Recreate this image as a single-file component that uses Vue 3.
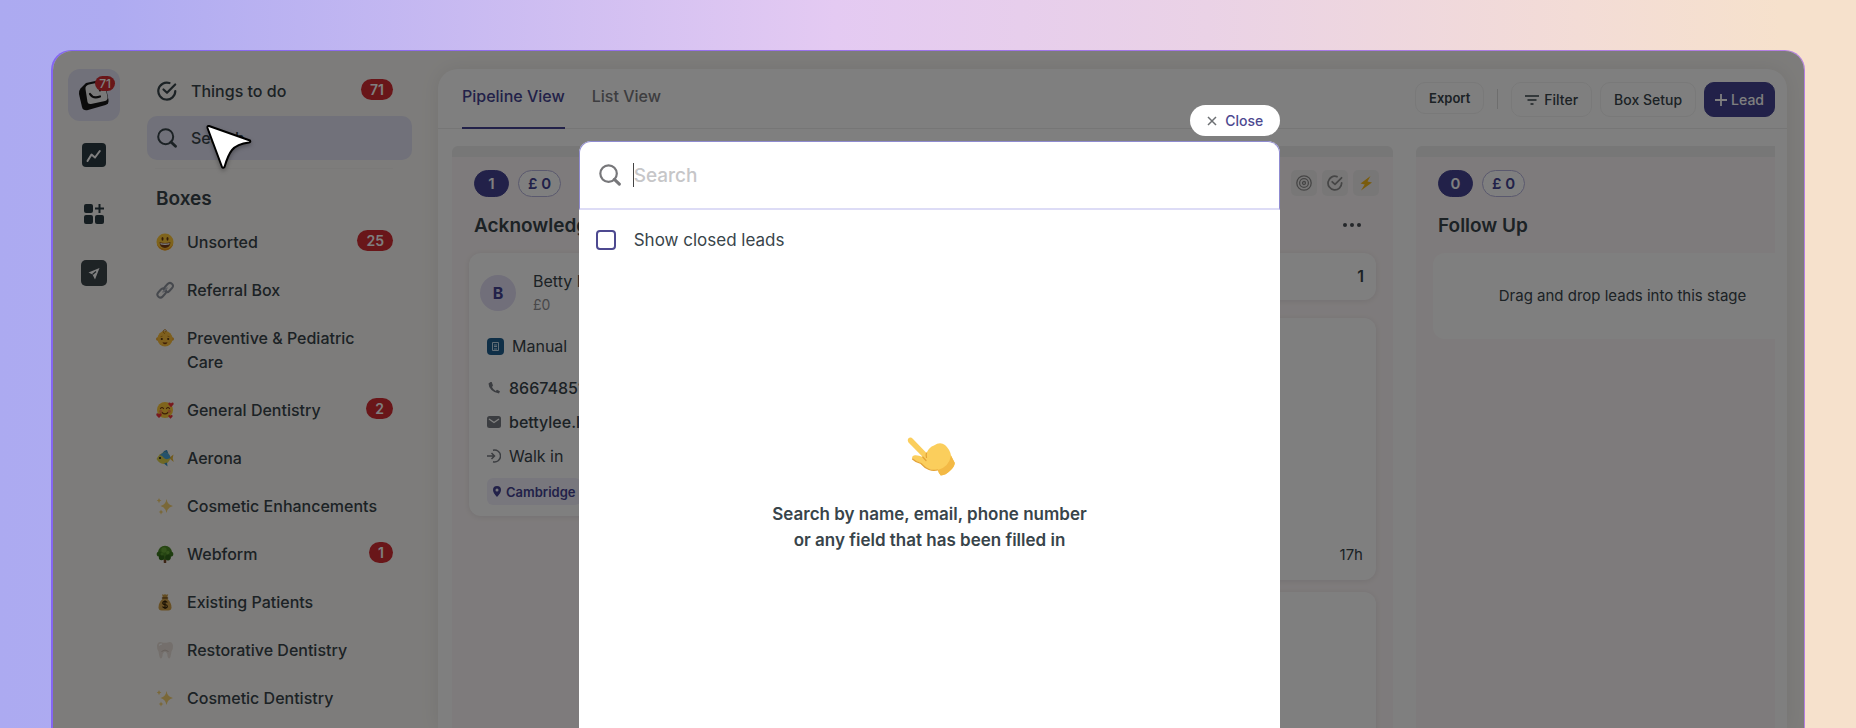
<template>
  <div class="page">
    <svg class="sprite" aria-hidden="true">
      <symbol id="smile" viewBox="0 0 18 18">
        <circle cx="9" cy="9" r="8.5" fill="#ffc838" />
        <path d="M9 17.5a8.500 8.500 0 0 0 8.300-7c-2 4-5 5-8.300 5s-6.500-1-8.300-5a8.500 8.500 0 0 0 8.300 7z" fill="#f09a20" />
        <ellipse cx="6.500" cy="5.800" rx="1" ry="1.900" fill="#6b3a10" />
        <ellipse cx="11.500" cy="5.800" rx="1" ry="1.900" fill="#6b3a10" />
        <path d="M3.500 9.300q5.500 1.400 11 0q-.5 5.700-5.500 5.700t-5.500-5.700z" fill="#7a3c12" />
        <path d="M4.300 9.900q4.700 1 9.400 0l-.4 1.700q-4.300.8-8.600 0z" fill="#fff" />
      </symbol>
      <symbol id="link" viewBox="0 0 18 18">
        <g fill="none" stroke="#8d929c" stroke-width="2">
          <rect x="7.500" y="3.500" width="10" height="6" rx="3" transform="rotate(-48 12.500 6.500)" />
          <rect x="0.800" y="9" width="10" height="6" rx="3" transform="rotate(-48 5.800 12)" />
          <path d="M6.500 11.500l5-5" stroke="#b9bdc6" stroke-width="1.500" />
        </g>
      </symbol>
      <symbol id="baby" viewBox="0 0 18 18">
        <circle cx="1.800" cy="10" r="1.800" fill="#eda52a" />
        <circle cx="16.200" cy="10" r="1.800" fill="#eda52a" />
        <ellipse cx="9" cy="9.800" rx="7.500" ry="7.700" fill="#fcbf3a" />
        <path d="M9 4.500c-2.500-.5-2.500-3.600 0-3.700 1.800 0 1.800 2 .4 2" fill="none" stroke="#b87412" stroke-width="1" />
        <circle cx="5.800" cy="10" r="1.100" fill="#54300e" />
        <circle cx="12.200" cy="10" r="1.100" fill="#54300e" />
        <path d="M4.500 7.700l2-.5M13.500 7.700l-2-.5" stroke="#b87412" stroke-width=".7" />
        <path d="M6.500 13q2.500 1 5 0q-.5 2.300-2.500 2.300t-2.500-2.300z" fill="#7a3c12" />
      </symbol>
      <symbol id="hearts" viewBox="0 0 18 18">
        <circle cx="9" cy="9" r="8" fill="#ffc838" />
        <path d="M4.500 7.500q1.500-2 3 0M10.500 7.500q1.500-2 3 0M6 11.500q3 2.800 6 0" fill="none" stroke="#7a3c12" stroke-width="1.200" stroke-linecap="round" />
        <circle cx="4.700" cy="10.300" r="1.600" fill="#ff8a4a" />
        <circle cx="13.300" cy="10.300" r="1.600" fill="#ff8a4a" />
        <path d="M15 6.200l-2.500-2.700q-.6-1.800 1-2 .9 0 1.500 1 .6-1 1.500-1 1.600.2 1 2z" fill="#f0323c" />
        <path d="M3 17l-2.500-2.600q-.7-1.900 1-2.100 1 0 1.500 1 .5-1 1.500-1 1.700.2 1 2.100z" fill="#f0323c" />
        <path d="M14.500 17.800l-2.100-2.200q-.5-1.600.9-1.700.8 0 1.200.9.400-.9 1.200-.9 1.400.1.900 1.700z" fill="#f0323c" />
      </symbol>
      <symbol id="fish" viewBox="0 0 18 18">
        <path d="M6 4.500Q8.500.5 11 1l1.500 4z" fill="#3a8fc4" />
        <path d="M13 9l4.500-3.500-.8 3.700 1 3.800z" fill="#e8b73a" />
        <path d="M.5 10Q4 3 9.500 3.500 14 4.500 14.500 9.500 12 15 7.500 15 3 14.500.5 10z" fill="#dfd04a" />
        <path d="M3.500 6.200Q6.500 3 9.800 3.500 14 4.500 14.500 9 10 11.500 7.500 8.500 6 6 3.500 6.200z" fill="#4aa5d8" />
        <path d="M8 14.500l3-1 .5 4z" fill="#3a8fc4" />
        <circle cx="4" cy="9" r="1.100" fill="#222" />
      </symbol>
      <symbol id="sparkles" viewBox="0 0 18 18">
        <path d="M10.500 2q.8 5.700 6.500 7-5.700 1.300-6.500 7-.8-5.700-6-7 5.200-1.300 6-7z" fill="#f5d070" />
        <path d="M3 1q.3 2.200 2.500 2.600Q3.300 4 3 6.200 2.700 4 .7 3.600 2.700 3.200 3 1zM5 12.500q.3 2.200 2.500 2.600-2.200.4-2.500 2.600-.3-2.200-2.300-2.600 2-.4 2.300-2.600z" fill="#f5d070" />
      </symbol>
      <symbol id="tree" viewBox="0 0 18 18">
        <path d="M7.500 11h3l-.3 7H7.800z" fill="#7a4a2a" />
        <circle cx="9" cy="7.800" r="7" fill="#4c8a26" />
        <circle cx="3.300" cy="9" r="2.600" fill="#3d7a1e" />
        <circle cx="14.700" cy="9" r="2.600" fill="#3d7a1e" />
        <circle cx="5.500" cy="12.500" r="2.700" fill="#33691a" />
        <circle cx="12" cy="12.600" r="2.800" fill="#33691a" />
        <circle cx="8" cy="5" r="2.700" fill="#68a838" />
        <circle cx="11.800" cy="7.500" r="1.800" fill="#68a838" />
        <circle cx="6" cy="9" r="1.500" fill="#5a9a30" />
      </symbol>
      <symbol id="money" viewBox="0 0 18 18">
        <path d="M6 1.200q1.500.9 3 0 1.500.9 3.200 0L11 5H7z" fill="#c99a45" />
        <path d="M7 5.200h4q4.500 4.500 4.500 9 0 3.300-3.300 3.300H5.800q-3.300 0-3.300-3.300 0-4.500 4.500-9z" fill="#d1a04a" />
        <path d="M6.500 5h5" stroke="#7f5418" stroke-width="1.500" stroke-linecap="round" />
        <path d="M11.300 9.600q-.6-1.200-2.300-1.200-2.200 0-2.200 1.500T9 11.500t2.300 1.700-2.300 1.600q-1.900 0-2.400-1.300M9 7.300v8.600" fill="none" stroke="#332208" stroke-width="1.200" />
      </symbol>
      <symbol id="tooth" viewBox="0 0 18 18">
        <path d="M1 4.500Q1.800.5 5.500 1.200 9 2.500 12.500 1.200 16.200.5 17 4.500q.3 3-1.500 6-.8 6.500-2.300 7-1.700-.2-1.900-4.500Q9 8.500 6.700 13q-.2 4.300-1.900 4.500-1.500-.5-2.300-7Q.7 7.500 1 4.500z" fill="#e8dfd8" />
        <path d="M3.200 4.500Q4 2.600 6 3.200" fill="none" stroke="#fff" stroke-width="1.200" />
        <path d="M5.500 10.500Q9 7.500 12.500 10.500" fill="none" stroke="#c3b5ac" stroke-width=".8" />
      </symbol>
      <symbol id="check" viewBox="0 0 20 20">
        <path d="M12.500 2A8.500 8.500 0 1 0 18.300 10" fill="none" stroke="currentColor" stroke-width="2.200" stroke-linecap="round" />
        <path d="M6.500 8.500l3.500 3.300L18.200 3.500" fill="none" stroke="currentColor" stroke-width="2.200" stroke-linecap="round" stroke-linejoin="round" />
      </symbol>
      <symbol id="search" viewBox="0 0 20 20">
        <circle cx="8.700" cy="8.700" r="7.500" fill="none" stroke="currentColor" stroke-width="2" />
        <path d="M14 14l4.500 4.300" stroke="currentColor" stroke-width="2.800" stroke-linecap="round" />
      </symbol>
    </svg>

    <div class="frame">
      <div class="app">
        <nav class="rail" aria-label="Main">
          <a class="rail-item active" href="#home" aria-label="Home">
            <svg width="34" height="34" viewBox="0 0 34 34">
              <path d="M9 5L23 2q4-.5 5 3l3.500 17q.5 4-3 5L11 32q-5 1-6-3L2 16Q1.500 13 3.500 10.500z" fill="#171717" />
              <path d="M12 6.500L24 4q3-.5 3.700 2l2.800 13q.5 3-2.500 4l-14 3q-3 .5-3.500-2L8.500 11q-.5-3.500 3.500-4.500z" fill="#f2f2f2" />
              <path d="M13 16q3 5 10 2.500M23 10.500v2" fill="none" stroke="#171717" stroke-width="2.200" stroke-linecap="round" />
            </svg>
            <span class="rail-badge">71</span>
          </a>
          <a class="rail-item" href="#reports" aria-label="Reports">
            <svg width="24" height="24" viewBox="0 0 24 24">
              <rect width="24" height="24" rx="4" fill="#2a3b42" />
              <path d="M5.500 18l4-6.500 3.500 3 4.800-6.500" fill="none" stroke="#fff" stroke-width="2" stroke-linecap="round" stroke-linejoin="round" />
            </svg>
          </a>
          <a class="rail-item" href="#apps" aria-label="Apps">
            <svg width="22" height="22" viewBox="0 0 22 22" fill="#2a3b42">
              <rect x="1" y="1" width="9" height="9" rx="2" />
              <rect x="1" y="12" width="9" height="9" rx="2" />
              <rect x="12" y="12" width="9" height="9" rx="2" />
              <path d="M16.500 1v9M12 5.500h9" stroke="#2a3b42" stroke-width="2" />
            </svg>
          </a>
          <a class="rail-item" href="#campaigns" aria-label="Campaigns">
            <svg width="26" height="26" viewBox="0 0 26 26">
              <rect width="26" height="26" rx="5" fill="#3c464b" />
              <path d="M18.500 8L7.500 12.500l4 2 2.500 5z" fill="#fff" />
              <path d="M11.500 14.500l3.500-3" stroke="#3c464b" stroke-width="1.200" />
            </svg>
          </a>
        </nav>

        <aside class="sidebar">
          <a class="side-link" href="#todo">
            <svg width="20" height="20"><use href="#check" /></svg>
            <span>Things to do</span>
            <span class="badge">71</span>
          </a>
          <a class="side-link selected" href="#search">
            <svg width="20" height="20"><use href="#search" /></svg>
            <span>Search</span>
          </a>
          <hr>
          <h2>Boxes</h2>
          <a v-for="(box, i) in boxes" :key="i" class="box-link" href="#box">
            <svg width="18" height="18"><use :href="'#' + box.icon" /></svg>
            <span class="box-name">{{ box.name }}</span>
            <span v-if="box.count" class="badge">{{ box.count }}</span>
          </a>
        </aside>

        <main class="main">
          <header class="topbar">
            <button class="tab current">Pipeline View</button>
            <button class="tab">List View</button>
            <div class="actions">
              <button class="btn small">Export</button>
              <span class="sep"></span>
              <button class="btn">
                <svg width="14" height="10" viewBox="0 0 14 10"><path d="M0 1h14M2.500 5h9M5.500 9h3" stroke="currentColor" stroke-width="1.600" /></svg>
                Filter
              </button>
              <button class="btn">Box Setup</button>
              <button class="btn primary">
                <svg width="12" height="12" viewBox="0 0 12 12"><path d="M6 0v12M0 6h12" stroke="currentColor" stroke-width="1.800" /></svg>
                Lead
              </button>
            </div>
          </header>

          <div class="board">
            <section class="column">
              <div class="pills"><span class="pill count">1</span><span class="pill">£ 0</span></div>
              <h3>Acknowledged</h3>
              <article class="card lead">
                <div class="person">
                  <span class="avatar">B</span>
                  <div>
                    <div class="name">Betty Lee</div>
                    <div class="value">£0</div>
                  </div>
                </div>
                <div class="source">
                  <svg width="17" height="17" viewBox="0 0 17 17">
                    <rect width="17" height="17" rx="4" fill="#1f5f8f" />
                    <path d="M5.500 4.500h6v8h-6zM7 7h3M7 8.500h3M7 11h3" fill="none" stroke="#c4dcec" />
                  </svg>
                  Manual
                </div>
                <div class="contact">
                  <svg width="14" height="14" viewBox="0 0 14 14"><path d="M3.500 1L1.500 2.500Q1.500 6 4.500 9t7.500 3.500l1-2.200-3-1.600-1.300 1.300Q6 8.500 5 6l1-1.500L4.700 1z" fill="#777b82" /></svg>
                  <span class="strong">866748512</span>
                </div>
                <div class="contact">
                  <svg width="14" height="14" viewBox="0 0 14 14"><rect y="1" width="14" height="12" rx="2.500" fill="#777b82" /><path d="M2 4l5 3.500L12 4" fill="none" stroke="#fff" stroke-width="1.400" /></svg>
                  <span class="strong">bettylee.lee@mail.com</span>
                </div>
                <div class="contact">
                  <svg width="14" height="14" viewBox="0 0 14 14"><path d="M6 1.200A6 6 0 1 1 6 12.800M0 7h7M4.500 4L7.500 7l-3 3" fill="none" stroke="#777b82" stroke-width="1.500" /></svg>
                  <span>Walk in</span>
                </div>
                <div class="tag">
                  <svg width="8" height="11" viewBox="0 0 8 11"><path d="M4 0a4 4 0 0 0-4 4q0 3 4 7 4-4 4-7a4 4 0 0 0-4-4zm0 2.500a1.500 1.500 0 1 1 0 3 1.500 1.500 0 0 1 0-3z" fill="#444392" fill-rule="evenodd" /></svg>
                  Cambridge
                </div>
              </article>
            </section>

            <section class="column">
              <div class="pills">
                <div class="tools">
                  <button class="tool" aria-label="Goals">
                    <svg width="16" height="16" viewBox="0 0 16 16" fill="none" stroke="currentColor" stroke-width="1.300"><circle cx="8" cy="8" r="7.200" /><circle cx="8" cy="8" r="4.400" /><circle cx="8" cy="8" r="1.500" /></svg>
                  </button>
                  <button class="tool" aria-label="Tasks"><svg width="16" height="16"><use href="#check" /></svg></button>
                  <button class="tool" aria-label="Automations">
                    <svg width="14" height="16" viewBox="0 0 14 16"><path d="M11.500 1L1.500 8.500l4.200 1L2 15.500 13 7.500 8.500 6.500z" fill="#f5b81a" /></svg>
                  </button>
                </div>
              </div>
              <div class="more-row">
                <button class="more" aria-label="More">
                  <svg width="18" height="4" viewBox="0 0 18 4" fill="currentColor"><circle cx="2" cy="2" r="2" /><circle cx="9" cy="2" r="2" /><circle cx="16" cy="2" r="2" /></svg>
                </button>
              </div>
              <div class="card group">1</div>
              <article class="card tall">17h</article>
              <article class="card tall"></article>
            </section>

            <section class="column">
              <div class="pills"><span class="pill count">0</span><span class="pill">£ 0</span></div>
              <h3>Follow Up</h3>
              <div class="drop">Drag and drop leads into this stage</div>
            </section>
          </div>
        </main>

        <div class="overlay">
          <div class="dialog" role="dialog" aria-label="Search">
            <button class="close">
              <svg width="10" height="10" viewBox="0 0 10 10"><path d="M1 1l8 8M9 1L1 9" stroke="#6d7073" stroke-width="1.500" /></svg>
              Close
            </button>
            <div class="panel">
              <div class="search-row">
                <svg width="22" height="22"><use href="#search" /></svg>
                <div class="field">
                  <input v-model="query" type="text" placeholder="Search" aria-label="Search">
                </div>
              </div>
              <label class="closed">
                <input v-model="showClosed" type="checkbox">
                Show closed leads
              </label>
              <div class="hint">
                <svg width="54" height="40" viewBox="-4 0 54 40">
                  <path d="M1.500 1.200Q3.800-.3 6 2L19.500 16Q22 10 27 8.500 33 4.500 38 8q5 4.500 6 10.500l3.800 7.500q-.3 4-5 8-4 4-9 4.500-2-1.500-3-5.500-5 .8-9-.8-4.500-2-8-6-5.500-1.500-8.500-5-.8-2.500 2.500-3 3.500-.3 8 1.800L1.500 5.500Q0 3 1.500 1.200z" fill="#fbce5c" />
                  <path d="M44 18.500l3.800 7.500q-.3 4-5 8-4 4-9 4.500-2-1.500-3-5.500Q42 30 44 18.500z" fill="#f3b945" />
                  <path d="M15.800 20L19 23.500M19.500 16q-.8 2.500 0 4.500M5.500 22q3 3 8.500 4.500 4 4.500 8 6 4 1.500 8.500.5" fill="none" stroke="#e3a236" stroke-width="1.200" stroke-linecap="round" />
                </svg>
                <p>Search by name, email, phone number<br>or any field that has been filled in</p>
              </div>
            </div>
          </div>
        </div>

        <svg class="cursor" width="50" height="50" viewBox="0 0 50 50">
          <path d="M5 4L46 18.500Q47 20 45 20.500 33 22 28 28 24 33 20.500 45 19 46.500 18 45L3.500 6Q3 3.500 5 4z" fill="#fff" stroke="#000" stroke-width="2" stroke-linejoin="round" />
        </svg>
      </div>
    </div>
  </div>
</template>

<script setup>
import { ref } from 'vue'

const query = ref('')
const showClosed = ref(false)

const boxes = [
  { icon: 'smile', name: 'Unsorted', count: 25 },
  { icon: 'link', name: 'Referral Box' },
  { icon: 'baby', name: 'Preventive & Pediatric Care' },
  { icon: 'hearts', name: 'General Dentistry', count: 2 },
  { icon: 'fish', name: 'Aerona' },
  { icon: 'sparkles', name: 'Cosmetic Enhancements' },
  { icon: 'tree', name: 'Webform', count: 1 },
  { icon: 'money', name: 'Existing Patients' },
  { icon: 'tooth', name: 'Restorative Dentistry' },
  { icon: 'sparkles', name: 'Cosmetic Dentistry' }
]
</script>

<style>
body { margin: 0; }
</style>

<style scoped>
* { box-sizing: border-box; }
.page { height: 100vh; overflow: hidden; display: flex; padding: 50px 51px 0; background: linear-gradient(90deg, #acaaf1 0%, #aeabf1 6%, #e4caf2 45%, #ead2e6 65%, #f3dcd6 85%, #f6e1cc 96%); font-family: Inter, "Liberation Sans", sans-serif; font-size: 16px; line-height: 24px; color: #38444a; }
.sprite { position: absolute; width: 0; height: 0; }
.frame { flex: 1; min-width: 0; display: flex; padding: 1px 1px 0 2px; border-radius: 20px 20px 0 0; background: linear-gradient(90deg, #8466f2, #b57fe2); }
.app { flex: 1; min-width: 0; position: relative; overflow: hidden; display: flex; padding-top: 18px; border-radius: 19px 19px 0 0; background: #fbf9f6; }
button { font-family: inherit; cursor: pointer; }
a { color: inherit; text-decoration: none; }
svg { flex: none; display: block; }

.rail { width: 82px; display: flex; flex-direction: column; align-items: center; gap: 7px; }
.rail-item { width: 52px; height: 52px; display: flex; align-items: center; justify-content: center; border-radius: 12px; position: relative; }
.rail-item.active { margin-bottom: 1px; background: #e2e2f4; }
.rail-badge { position: absolute; top: 7px; right: 5px; padding: 0 4px; border-radius: 8px; background: #d22c32; color: #fff; font-size: 12px; line-height: 15px; font-weight: 500; }

.sidebar { width: 265px; margin-left: 12px; font-weight: 500; }
.side-link { height: 44px; display: flex; align-items: center; gap: 14px; padding: 0 19px 0 10px; border-radius: 10px; }
.side-link.selected { margin-top: 3px; background: #e2e2f4; }
.badge { margin-left: auto; padding: 0 9px; border-radius: 11px; background: #d22c32; color: #fff; font-size: 14px; line-height: 21px; font-weight: 600; }
.side-link .badge { margin-bottom: 3px; }
hr { margin: 8px 19px 0 8px; border: 0; border-top: 1px solid #f5f3f0; }
h2 { margin: 18px 0 7px 9px; font-size: 19px; line-height: 24px; font-weight: 600; }
.box-link { display: flex; align-items: flex-start; gap: 13px; padding: 12px 19px 12px 9px; }
.box-link svg { margin-top: 3px; }
.box-name { max-width: 190px; }

.main { flex: 1; min-width: 0; margin: 0 17px 0 26px; border-radius: 20px 20px 0 0; background: #fff; box-shadow: 0 0 20px rgba(0, 0, 0, .08); }
.topbar { height: 60px; display: flex; padding: 0 12px 0 24px; border-bottom: 1px solid #ececec; }
.tab { height: 60px; margin-right: 27px; padding: 0 0 6px; border: 0; background: none; color: #7a7a80; font-size: 16px; font-weight: 500; }
.tab.current { border-bottom: 2px solid #444392; color: #444392; padding-bottom: 4px; }
.actions { margin-left: auto; padding-top: 13px; display: flex; align-items: flex-start; gap: 8px; }
.btn { height: 35px; display: flex; align-items: center; gap: 5px; padding: 0 13px; border: 1px solid #f2f2f2; border-radius: 10px; background: #fff; color: #38444a; font-size: 14px; font-weight: 500; }
.btn.small { height: 32px; font-size: 13px; font-weight: 600; }
.btn.primary { gap: 4px; padding: 0 10px; border-color: #444392; background: #444392; color: #fff; }
.sep { width: 1px; height: 20px; margin: 7px 5px 0; background: #ddd; }

.board { display: flex; gap: 23px; margin: 17px 12px 0 14px; overflow: hidden; }
.column { flex: none; width: 459px; height: 100vh; padding: 13px 17px 0; border-top: 11px solid #eee; border-radius: 6px 6px 0 0; background: #fdf7f8; }
.pills { height: 27px; display: flex; gap: 9px; margin-left: 5px; }
.pill { min-width: 35px; height: 27px; padding: 0 9px; border: 1px solid #b5b2dc; border-radius: 14px; background: #fff; color: #444392; font-size: 15px; line-height: 25px; font-weight: 600; text-align: center; }
.pill.count { border-color: #444392; background: #444392; color: #fff; }
h3 { margin: 17px 0 15px 5px; font-size: 19px; line-height: 24px; font-weight: 600; }
.card { border-radius: 12px; background: #fff; box-shadow: 0 1px 6px rgba(0, 0, 0, .09); }
.lead { padding: 20px 18px 11px; }
.person { display: flex; align-items: center; gap: 17px; margin: -4px 0 17px -7px; }
.avatar { width: 36px; height: 36px; border-radius: 50%; background: #e2def4; color: #444392; font-weight: 700; line-height: 36px; text-align: center; }
.name { white-space: nowrap; }
.value { color: #909094; font-size: 14px; }
.source { display: flex; align-items: center; gap: 8px; margin-bottom: 13px; }
.contact { height: 34px; display: flex; align-items: center; gap: 8px; }
.strong { font-weight: 500; }
.tag { display: inline-flex; align-items: center; gap: 5px; height: 27px; margin-top: 5px; padding: 0 6px; border-radius: 6px; background: #f0effb; color: #444392; font-size: 13px; font-weight: 600; }
.tools { display: flex; gap: 5px; margin: 0 -3px 0 auto; }
.tool { width: 26px; height: 26px; display: flex; align-items: center; justify-content: center; padding: 0; border: 0; border-radius: 5px; background: #f1efef; color: #8c8c8c; }
.more-row { height: 56px; display: flex; justify-content: flex-end; padding: 24px 15px 0 0; }
.more { height: 8px; padding: 0; border: 0; background: none; color: #4a4f55; }
.group { height: 47px; padding: 11px 12px; text-align: right; font-weight: 600; }
.tall { height: 262px; display: flex; align-items: flex-end; justify-content: flex-end; margin-top: 18px; padding: 13px; font-size: 15px; }
.tall + .tall { margin-top: 12px; }
.drop { height: 86px; display: flex; align-items: center; justify-content: center; padding-right: 46px; border-radius: 12px; background: #fff; font-size: 15px; }

.overlay { position: absolute; inset: 0; display: flex; justify-content: center; padding: 54px 0 0 2px; background: rgba(0, 0, 0, .5); }
.dialog { width: calc(40% + 2px); display: flex; flex-direction: column; }
.close { align-self: flex-end; height: 31px; display: flex; align-items: center; gap: 8px; margin-bottom: 5px; padding: 0 17px; border: 0; border-radius: 16px; background: #fff; color: #4d4990; font-size: 14px; font-weight: 500; }
.panel { flex: 1; display: flex; flex-direction: column; border-radius: 12px 12px 0 0; background: #fff; }
.search-row { height: 69px; display: flex; align-items: center; gap: 12px; padding: 0 19px; border: 1px solid #8f8bd0; border-bottom: 2px solid #dddcf6; border-radius: 12px 12px 0 0; color: #77777a; }
.field { flex: 1; border-left: 1px solid #444; }
.field input { display: block; width: 100%; height: 24px; padding: 0; border: 0; outline: 0; background: none; color: #38444a; font-family: inherit; font-size: 19px; font-weight: 500; }
.field input::placeholder { color: #c6c6c8; }
.closed { display: flex; align-items: center; gap: 18px; padding: 18px 17px; font-size: 17px; }
.closed input { appearance: none; width: 20px; height: 20px; margin: 0; border: 2px solid #4d4990; border-radius: 4px; background: #fff; }
.hint { display: flex; flex-direction: column; align-items: center; margin-top: 167px; text-align: center; }
.hint p { margin: 24px 0 0; font-size: 17px; line-height: 26px; font-weight: 600; }
.cursor { position: absolute; left: 151px; top: 71px; filter: drop-shadow(0 2px 2px rgba(0, 0, 0, .3)); }
</style>
